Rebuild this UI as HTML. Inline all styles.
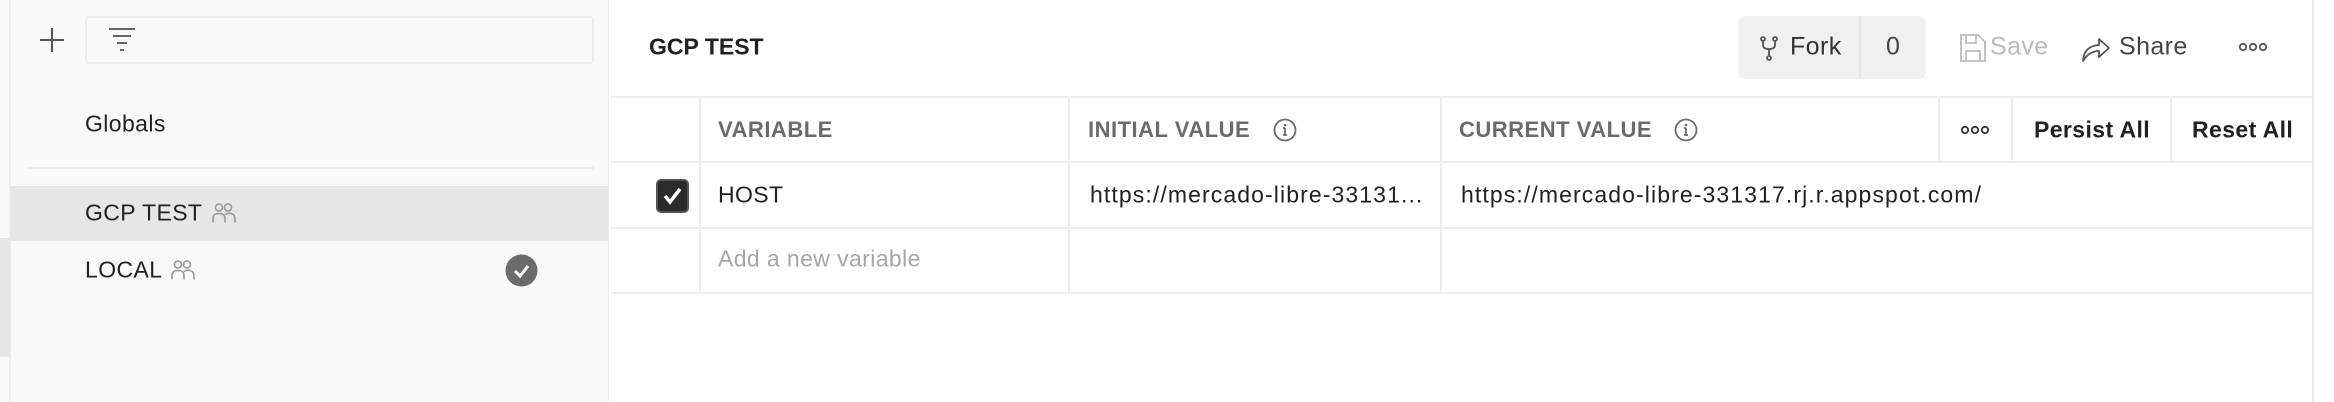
<!DOCTYPE html>
<html><head><meta charset="utf-8">
<style>
*{margin:0;padding:0;box-sizing:border-box}
body{width:2334px;height:402px;background:#fff;font-family:"Liberation Sans",sans-serif;position:relative;overflow:hidden;color:#212121}
.a{position:absolute;white-space:nowrap}
.side{left:0;top:0;width:609px;height:402px;background:#f9f9f9;border-right:1px solid #ededed}
.vl{position:absolute;width:2px;background:#ededed}
.hl{position:absolute;height:2px;background:#ededed}
.t{font-size:23px;letter-spacing:0.4px;transform:translateY(-50%)}
.u{font-size:23px;letter-spacing:1.1px;transform:translateY(-50%)}
.h{font-size:22px;letter-spacing:0.5px;font-weight:bold;color:#6b6b6b;transform:translateY(-50%)}
</style></head><body>
<div class="a side"></div>
<div class="a" style="left:0;top:0;width:11px;height:402px;background:#f9f9f9;border-right:2px solid #ededed"></div>
<div class="a" style="left:0;top:238px;width:10px;height:119px;background:#e6e6e6"></div>
<svg class="a" style="left:39px;top:27px" width="26" height="26"><path d="M13 1V25M1 13H25" stroke="#555" stroke-width="2"/></svg>
<div class="a" style="left:85px;top:16px;width:509px;height:48px;border:2px solid #ececec;border-radius:4px;background:#f9f9f9"></div>
<svg class="a" style="left:107px;top:27px" width="30" height="26"><path d="M2 2H28M6 9H24M10 16H20M13 23H17" stroke="#666" stroke-width="2"/></svg>
<div class="a t" style="left:85px;top:124px">Globals</div>
<div class="a" style="left:28px;top:167px;width:566px;height:2px;background:#ececec"></div>
<div class="a" style="left:11px;top:186px;width:597px;height:55px;background:#e6e6e6"></div>
<div class="a t" style="left:85px;top:213px">GCP TEST <svg width="26" height="22" style="vertical-align:-3px;margin-left:2px"><g fill="none" stroke="#999" stroke-width="1.6"><circle cx="8" cy="6" r="3.5"/><circle cx="17" cy="6" r="3.5"/><path d="M2 21V17Q2 12 8 12Q14 12 14 17V21M14 13Q17 11 20 12Q24 13 24 18V21"/></g></svg></div>
<div class="a t" style="left:85px;top:270px">LOCAL <svg width="26" height="22" style="vertical-align:-3px;margin-left:2px"><g fill="none" stroke="#999" stroke-width="1.6"><circle cx="8" cy="6" r="3.5"/><circle cx="17" cy="6" r="3.5"/><path d="M2 21V17Q2 12 8 12Q14 12 14 17V21M14 13Q17 11 20 12Q24 13 24 18V21"/></g></svg></div>
<svg class="a" style="left:505px;top:254px" width="33" height="33"><circle cx="16.5" cy="16.5" r="16" fill="#6b6b6b"/><path d="M10 17L15 22L23 12" stroke="#fff" stroke-width="3" fill="none"/></svg>

<div class="a" style="left:649px;top:47px;font-size:23px;font-weight:bold;transform:translateY(-50%)">GCP TEST</div>
<div class="a" style="left:1738px;top:16px;width:188px;height:63px;background:#f0f0f0;border-radius:7px"></div>
<div class="a" style="left:1859px;top:16px;width:2px;height:63px;background:#e2e2e2"></div>
<svg class="a" style="left:1760px;top:36px" width="18" height="26"><g fill="none" stroke="#555" stroke-width="1.8"><circle cx="3" cy="3" r="2"/><circle cx="15" cy="3" r="2"/><circle cx="9" cy="22" r="2"/><path d="M3 5V9Q3 13 9 13Q15 13 15 9V5M9 13V20"/></g></svg>
<div class="a t" style="left:1790px;top:47px;font-size:25px;color:#333">Fork</div>
<div class="a t" style="left:1886px;top:47px;font-size:25px;color:#444">0</div>
<svg class="a" style="left:1960px;top:34px" width="26" height="28"><g fill="none" stroke="#bbb" stroke-width="1.8"><path d="M1 1H18L25 8V27H1Z"/><path d="M6 1V9H16V1M6 27V17H20V27"/></g></svg>
<div class="a t" style="left:1990px;top:47px;font-size:25px;color:#bbb">Save</div>
<svg class="a" style="left:2081px;top:34px" width="30" height="28"><path d="M2 27Q3 12 18 11V5L28 14L18 23V17Q8 17 2 27Z" fill="none" stroke="#555" stroke-width="1.8" stroke-linejoin="round"/></svg>
<div class="a t" style="left:2119px;top:47px;font-size:25px;color:#444">Share</div>
<svg class="a" style="left:2238px;top:41px" width="30" height="12"><g fill="none" stroke="#555" stroke-width="1.8"><circle cx="5" cy="6" r="3.2"/><circle cx="15" cy="6" r="3.2"/><circle cx="25" cy="6" r="3.2"/></g></svg>

<div class="hl" style="left:611px;top:96px;width:1703px"></div>
<div class="hl" style="left:611px;top:161px;width:1703px"></div>
<div class="hl" style="left:611px;top:227px;width:1703px"></div>
<div class="hl" style="left:611px;top:292px;width:1703px"></div>
<div class="vl" style="left:2312px;top:0;height:402px"></div>
<div class="vl" style="left:699px;top:96px;height:198px"></div>
<div class="vl" style="left:1068px;top:96px;height:198px"></div>
<div class="vl" style="left:1440px;top:96px;height:198px"></div>
<div class="vl" style="left:1938px;top:96px;height:66px"></div>
<div class="vl" style="left:2011px;top:96px;height:66px"></div>
<div class="vl" style="left:2170px;top:96px;height:66px"></div>

<div class="a h" style="left:718px;top:130px">VARIABLE</div>
<div class="a h" style="left:1088px;top:130px">INITIAL VALUE</div>
<svg class="a" style="left:1273px;top:118px" width="24" height="24"><circle cx="12" cy="12" r="10.5" fill="none" stroke="#6b6b6b" stroke-width="1.8"/><path d="M12 10V17M10 17H14M10 10H12" stroke="#6b6b6b" stroke-width="1.8"/><circle cx="12" cy="7" r="1.3" fill="#6b6b6b"/></svg>
<div class="a h" style="left:1459px;top:130px">CURRENT VALUE</div>
<svg class="a" style="left:1674px;top:118px" width="24" height="24"><circle cx="12" cy="12" r="10.5" fill="none" stroke="#6b6b6b" stroke-width="1.8"/><path d="M12 10V17M10 17H14M10 10H12" stroke="#6b6b6b" stroke-width="1.8"/><circle cx="12" cy="7" r="1.3" fill="#6b6b6b"/></svg>
<svg class="a" style="left:1960px;top:124px" width="30" height="12"><g fill="none" stroke="#333" stroke-width="1.8"><circle cx="5" cy="6" r="3.2"/><circle cx="15" cy="6" r="3.2"/><circle cx="25" cy="6" r="3.2"/></g></svg>
<div class="a t" style="left:2034px;top:130px;font-weight:bold;font-size:23px">Persist All</div>
<div class="a t" style="left:2192px;top:130px;font-weight:bold;font-size:23px">Reset All</div>

<div class="a" style="left:656px;top:179px;width:33px;height:34px;background:#2b2b2b;border:2px solid #555;border-radius:5px"></div>
<svg class="a" style="left:656px;top:179px" width="33" height="34"><path d="M9 17L14 23L24 10" stroke="#fff" stroke-width="3.5" fill="none"/></svg>
<div class="a t" style="left:718px;top:195px">HOST</div>
<div class="a u" style="left:1090px;top:195px;width:345px;overflow:hidden">https://mercado-libre-33131...</div>
<div class="a u" style="left:1461px;top:195px">https://mercado-libre-331317.rj.r.appspot.com/</div>
<div class="a t" style="left:718px;top:259px;color:#a6a6a6">Add a new variable</div>
</body></html>
